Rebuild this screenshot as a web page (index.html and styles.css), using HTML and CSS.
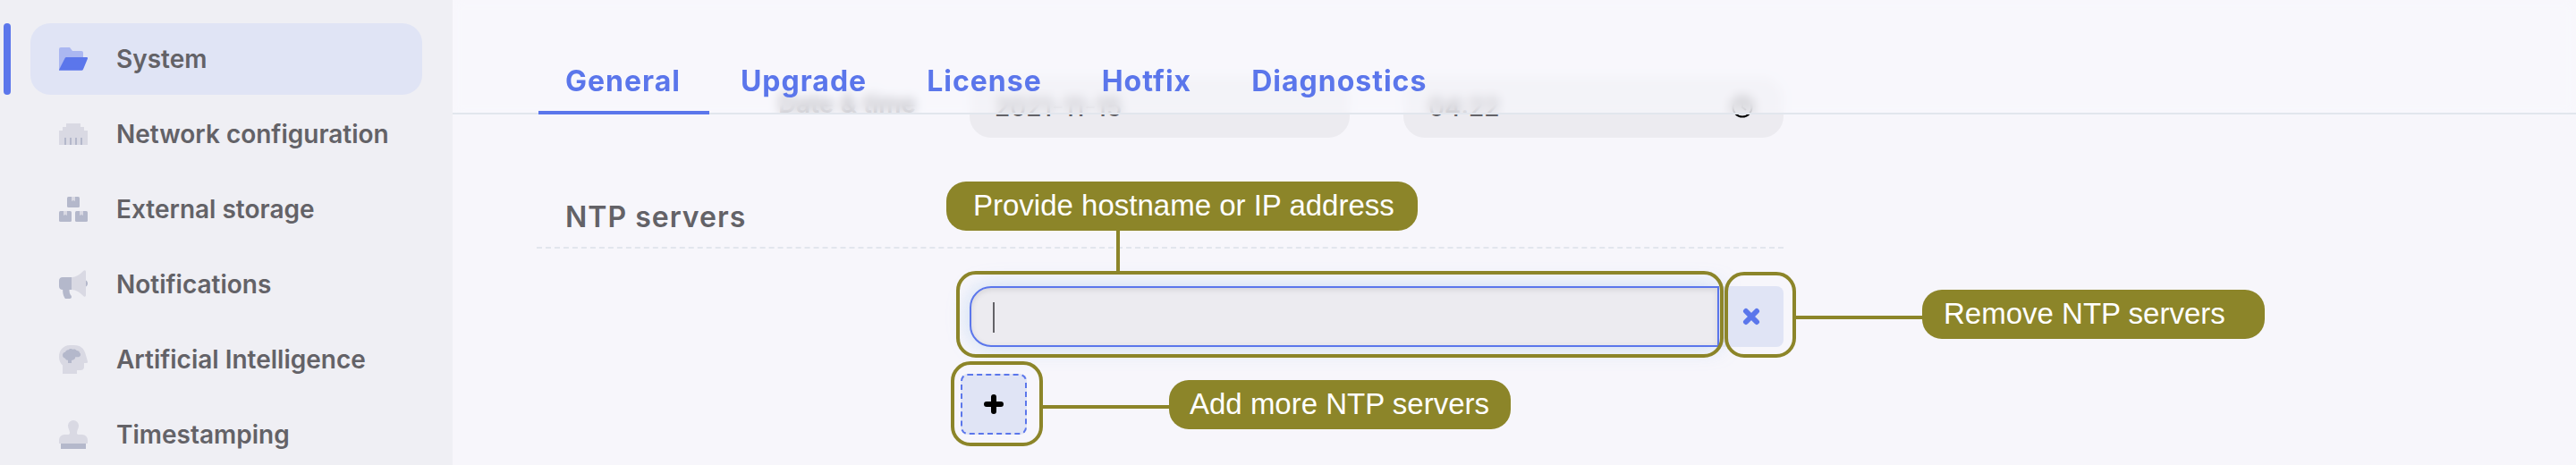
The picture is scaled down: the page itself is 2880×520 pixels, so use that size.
FILE: index.html
```html
<!DOCTYPE html>
<html lang="en">
<head>
  <meta charset="UTF-8" />
  <meta name="viewport" content="width=device-width, initial-scale=1" />
  <title>System - General</title>
  <link rel="stylesheet" href="styles.css">
</head>
<body>
  <div class="app">
    <nav class="sidebar">
      <a class="item active" href="#system">
        <svg class="icon" viewBox="0 0 32 32">
          <path class="light" d="M2 3h10l3 4h10a2 2 0 0 1 2 2v5H9L0 28V5a2 2 0 0 1 2-2z" />
          <path class="dark" d="M8.500 14H31a1 1 0 0 1 1 1.500L27 27.500a2 2 0 0 1-2 1.300H.6a.6.6 0 0 1-.5-1L6.500 15.200A2 2 0 0 1 8.500 14z" />
        </svg>
        System
      </a>
      <a class="item" href="#network">
        <svg class="icon" viewBox="0 0 32 32">
          <path class="light" d="M8 4h16v4h4v4h4v16H0V12h4V8h4z" />
          <path class="dark" d="M6 20h2v8H6zM12 20h2v8h-2zM18 20h2v8h-2zM24 20h2v8h-2z" />
        </svg>
        Network configuration
      </a>
      <a class="item" href="#storage">
        <svg class="icon" viewBox="0 0 32 32">
          <rect class="dark" x="9" y="2" width="14" height="12" rx="1.500" />
          <rect class="dark" x="0" y="18" width="14" height="12" rx="1.500" />
          <rect class="dark" x="18" y="18" width="14" height="12" rx="1.500" />
          <path class="light" d="M14 2h4v5l-2-1-2 1zM5 18h4v5l-2-1-2 1zM23 18h4v5l-2-1-2 1z" />
        </svg>
        External storage
      </a>
      <a class="item" href="#notifications">
        <svg class="icon" viewBox="0 0 32 32">
          <path class="dark" d="M4 8h10v14h-2.500c0 3 .5 5 2 6.500 1 1.500.3 3.500-1.500 3.500H8c-1 0-1.500-.5-2-1.500C4.500 27.500 4 25 4.200 22 1.500 22 0 20.500 0 18v-6c0-2.500 1.500-4 4-4zM30 11.500c2.700 1.200 2.700 5.800 0 7z" />
          <path class="light" d="M14 8c5 0 9-3 13.500-7.300C28.700-.4 30 .2 30 2v26c0 1.800-1.300 2.400-2.500 1.300C23 25 19 22 14 22z" />
        </svg>
        Notifications
      </a>
      <a class="item" href="#ai">
        <svg class="icon" viewBox="0 0 32 32">
          <path class="light" d="M12 0h5c7 0 11 4 12.500 9.500L32 18.300c.3 1-.3 1.700-1.200 1.700H28v4a4 4 0 0 1-4 4h-4v4H4v-9.500C1.500 20.500 0 17 0 13 0 5.500 5 0 12 0z" />
          <path class="dark" d="M4 11c0-2 1.500-3 3-3.200C7.500 6 9 5 10.700 5.200 11.500 4 14 3.500 15.300 4.700 17 4 19 4.500 19.700 6 21.500 6 23 7.200 23 8.500c1.500.8 1.500 3.200.2 4-1 .9-3 .8-5 .8 0 2-1.500 3.500-4.200 3.700V20h-4v-3.200c-1.500 0-2.700-.6-3-2C5 14.500 4 13 4 11z" />
        </svg>
        Artificial Intelligence
      </a>
      <a class="item" href="#timestamping">
        <svg class="icon" viewBox="0 0 32 32">
          <path class="light" d="M16 0a6 6 0 0 1 6 6c0 3.500-2 4.500-2 8 0 1.500.7 2 2 2h4a6 6 0 0 1 6 6v4H0v-4a6 6 0 0 1 6-6h4c1.300 0 2-.5 2-2 0-3.500-2-4.500-2-8a6 6 0 0 1 6-6z" />
          <path class="dark" d="M2 26h28v6H2z" />
        </svg>
        Timestamping
      </a>
    </nav>

    <main class="main">
      <header class="tabs">
        <a class="tab active" href="#general">General</a>
        <a class="tab" href="#upgrade">Upgrade</a>
        <a class="tab" href="#license">License</a>
        <a class="tab" href="#hotfix">Hotfix</a>
        <a class="tab" href="#diagnostics">Diagnostics</a>
      </header>

      <form class="form">
        <div class="row">
          <label class="row-label" for="date">Date &amp; time</label>
          <div class="pair">
            <input class="field" id="date" type="text" value="2021-11-15" />
            <div class="time">
              <input class="field" type="text" value="04:22" aria-label="Time" />
              <svg class="clock" viewBox="0 0 24 24">
                <circle cx="12" cy="12" r="10.500" />
                <path d="M12 5v7l4 3" />
              </svg>
            </div>
          </div>
        </div>

        <h2 class="section-title">NTP servers</h2>

        <div class="servers">
          <div class="server">
            <div class="server-input">
              <input class="field focused" type="text" aria-label="NTP server" />
              <span class="caret"></span>
              <span class="ring"></span>
              <span class="line"></span>
              <span class="callout">Provide hostname or IP address</span>
            </div>
            <div class="server-remove">
              <button class="remove" type="button" aria-label="Remove">
                <svg viewBox="0 0 20 20"><path d="M4 4l12 12M16 4L4 16" /></svg>
              </button>
              <span class="ring"></span>
              <span class="line"></span>
              <span class="callout">Remove NTP servers</span>
            </div>
          </div>
          <div class="server-add">
            <button class="add" type="button" aria-label="Add">
              <svg viewBox="0 0 22 22"><path d="M11 3v16M3 11h16" /></svg>
            </button>
            <span class="ring"></span>
            <span class="line"></span>
            <span class="callout">Add more NTP servers</span>
          </div>
        </div>
      </form>
    </main>
  </div>
</body>
</html>
```
FILE: styles.css
```css
:root {
  --blue: #5b76eb;
  --pale: #e0e4f5;
  --olive: #8c8529;
  --text: #636267;
  --line: #e2e6ed;
}
* { box-sizing: border-box; }
body { margin: 0; font-family: Inter, "Liberation Sans", sans-serif; background-color: #f7f6fb; color: var(--text); }
a { text-decoration: none; color: inherit; }
.app { display: flex; height: 100vh; overflow: hidden; }

.sidebar {
  flex: 0 0 506px; display: flex; flex-direction: column; gap: 4px;
  padding: 26px 34px; background-color: #efeff4;
}
.item {
  position: relative; flex: none; display: flex; align-items: center; gap: 32px;
  height: 80px; padding: 0 32px; border-radius: 22px;
  font-size: 28px; font-weight: 600; white-space: nowrap;
}
.item.active { background-color: var(--pale); }
.item.active::before {
  content: ""; position: absolute; left: -30px; top: 0; bottom: 0;
  width: 8px; border-radius: 4px; background-color: var(--blue);
}
.icon { flex: none; width: 32px; height: 32px; }
.light { fill: #d9d9e3; }
.dark { fill: #b4b8cb; }
.active .light { fill: #abb7f1; }
.active .dark { fill: var(--blue); }

.main { position: relative; flex: 1; min-width: 0; }
.tabs {
  position: absolute; z-index: 2; top: 0; left: 0; right: 0;
  display: flex; gap: 5px; padding: 54px 0 0 96px;
  border-bottom: 2px solid var(--line);
  background-color: rgba(248, 248, 253, 0.6);
  backdrop-filter: blur(6px);
}
.tab {
  height: 74px; margin-bottom: -2px; padding: 17px 32px 0 30px;
  font-size: 32px; line-height: 40px; font-weight: 700; letter-spacing: 1px; color: var(--blue);
}
.tab.active { border-bottom: 4px solid var(--blue); }

.form { max-width: 1488px; padding: 86px 0 0 94px; }
.row { display: flex; align-items: center; gap: 60px; }
.row-label { flex: 0 0 424px; padding-bottom: 8px; text-align: right; font-size: 28px; font-weight: 600; }
.pair { flex: 1; display: grid; grid-template-columns: 1fr 1fr; gap: 60px; }
.field {
  display: block; width: 100%; height: 68px; padding: 0 26px;
  border: 2px solid transparent; border-radius: 24px; outline: none;
  background-color: #ecebf0; color: var(--text); font: 500 28px Inter, sans-serif;
}
.time { position: relative; }
.clock {
  position: absolute; right: 34px; top: 22px; width: 24px; height: 24px;
  fill: none; stroke: #000; stroke-width: 2;
}
.section-title {
  margin: 69px 0 42px; padding: 0 32px 13px; border-bottom: 2px dashed var(--line);
  font-size: 32px; line-height: 40px; font-weight: 600; letter-spacing: 1px;
}

.servers { margin-left: 484px; }
.server { display: flex; }
.server-input { position: relative; flex: 1; }
.field.focused {
  border-color: var(--blue); border-radius: 24px 0 0 24px;
  box-shadow: inset 0 2px 6px rgba(0, 0, 0, 0.1), 0 0 24px rgba(130, 180, 235, 0.4);
}
.caret { position: absolute; left: 26px; top: 18px; width: 2px; height: 34px; background-color: var(--text); }
.server-remove { position: relative; flex: 0 0 72px; }
.remove, .add { display: flex; align-items: center; justify-content: center; height: 68px; padding: 0; background-color: var(--pale); }
.remove { width: 72px; border: none; border-radius: 0 8px 8px 0; }
.remove svg { width: 20px; height: 20px; fill: none; stroke: var(--blue); stroke-width: 6; stroke-linecap: round; }
.server-add { position: relative; width: 74px; margin: 30px 0 0 -10px; }
.add { width: 100%; border: 2px dashed var(--blue); border-radius: 8px; }
.add svg { width: 22px; height: 22px; fill: none; stroke: #000; stroke-width: 6; stroke-linecap: round; }

/* annotations on top of the form */
.ring { position: absolute; z-index: 1; border: 4px solid var(--olive); border-radius: 22px; pointer-events: none; }
.line { position: absolute; background-color: var(--olive); }
.callout {
  position: absolute; height: 55px; border-radius: 22px; background-color: var(--olive); color: #fff;
  font: 33px/53px "Liberation Sans", sans-serif; white-space: nowrap;
}
.server-input .ring { top: -17px; right: -5px; bottom: -12px; left: -15px; }
.server-input .line { left: 164px; top: -62px; width: 4px; height: 45px; }
.server-input .callout { left: -26px; top: -117px; padding: 0 26px 0 30px; }
.server-remove .ring { top: -16px; right: -14px; bottom: -12px; left: 6px; }
.server-remove .line { left: 86px; top: 33px; width: 142px; height: 4px; }
.server-remove .callout { left: 227px; top: 4px; padding: 0 44px 0 24px; }
.server-add .ring { top: -14px; right: -18px; bottom: -13px; left: -11px; }
.server-add .line { left: 92px; top: 35px; width: 142px; height: 4px; }
.server-add .callout { left: 233px; top: 7px; padding: 0 24px 0 23px; }
```
